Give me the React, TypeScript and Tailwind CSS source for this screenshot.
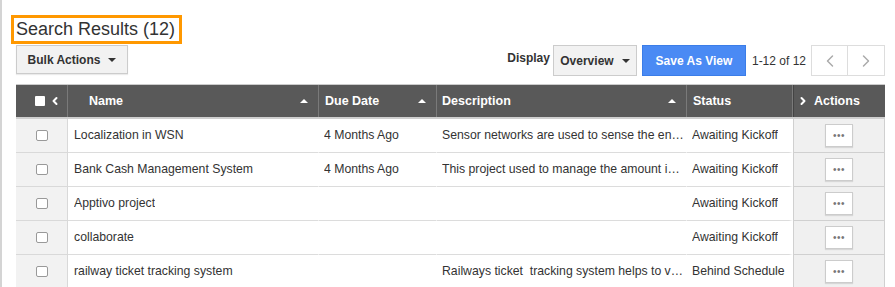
import { ChevronLeft, ChevronRight } from 'lucide-react';

interface Row {
  name: string;
  due: string;
  description: string;
  status: string;
}

const rows: Row[] = [
  {
    name: 'Localization in WSN',
    due: '4 Months Ago',
    description: 'Sensor networks are used to sense the environment',
    status: 'Awaiting Kickoff',
  },
  {
    name: 'Bank Cash Management System',
    due: '4 Months Ago',
    description: 'This project used to manage the amount in bank',
    status: 'Awaiting Kickoff',
  },
  { name: 'Apptivo project', due: '', description: '', status: 'Awaiting Kickoff' },
  { name: 'collaborate', due: '', description: '', status: 'Awaiting Kickoff' },
  {
    name: 'railway ticket tracking system',
    due: '',
    description: 'Railways ticket  tracking system helps to view the status',
    status: 'Behind Schedule',
  },
];

const grid = 'grid grid-cols-[52px_251px_118px_250px_106px_92px]';

function Caret() {
  return (
    <span className="ml-2 inline-block h-0 w-0 border-x-[4px] border-t-[4px] border-x-transparent border-t-[#333]" />
  );
}

function SortUp() {
  return (
    <span className="inline-block h-0 w-0 border-x-[4px] border-b-[4px] border-x-transparent border-b-white" />
  );
}

function HeaderCell({ label, sort, pad }: { label: string; sort?: boolean; pad: string }) {
  return (
    <div className={`flex items-center justify-between border-r border-[#7a7a7a] pr-[10px] ${pad}`}>
      <span>{label}</span>
      {sort && <SortUp />}
    </div>
  );
}

export default function App() {
  return (
    <div
      className="h-[287px] w-[895px] overflow-hidden border-l-2 border-[#d4d4d4] bg-white text-[#333]"
      style={{ fontFamily: '"Liberation Sans", Arial, sans-serif' }}
    >
      <div className="pl-[14px] pr-[10px] pt-[15px]">
        {/* Title */}
        <div className="-ml-[5px] flex">
          <h1 className="border-[3px] border-[#ff9800] pl-[2px] pr-[4px] text-[18px] leading-[23px] text-[#333]">
            Search Results (12)
          </h1>
        </div>

        {/* Toolbar */}
        <div className="mt-[1px] flex items-start justify-between">
          <button className="flex h-[29px] w-[112px] items-center justify-center border border-[#ccc] bg-[#f2f2f2] text-[12px] font-bold text-[#333] shadow-[0_1px_1px_rgba(0,0,0,0.08)]">
            Bulk Actions
            <Caret />
          </button>
          <div className="flex items-start">
            <span className="mt-[4px] mr-[3px] text-[12px] font-bold">Display</span>
            <button className="flex h-[31px] w-[84px] items-center justify-center border border-[#ccc] bg-[#f2f2f2] text-[12px] font-bold text-[#333]">
              Overview
              <Caret />
            </button>
            <button className="ml-[5px] h-[31px] w-[104px] border border-[#3b7de8] bg-[#4a8af4] text-[12px] font-bold text-white">
              Save As View
            </button>
            <span className="ml-[6px] mt-[7px] text-[12px] text-[#333]">1-12 of 12</span>
            <div className="ml-[5px] flex h-[31px] border border-[#ddd] bg-white">
              <span className="flex w-[36px] items-center justify-center border-r border-[#ddd] text-[#aaa]">
                <ChevronLeft size={20} strokeWidth={1.75} />
              </span>
              <span className="flex w-[36px] items-center justify-center text-[#aaa]">
                <ChevronRight size={20} strokeWidth={1.75} />
              </span>
            </div>
          </div>
        </div>

        {/* Table */}
        <div className="mt-[8px] w-[869px] border-t border-[#ccc]">
          <div className={`${grid} h-[34px] border-b-2 border-[#cfcfcf] bg-[#595959] text-[12.5px] font-bold text-white`}>
            <div className="flex items-center justify-end gap-[4px] border-r border-[#7a7a7a] pr-[6px]">
              <span className="inline-block h-[10px] w-[10px] rounded-[1px] bg-white" />
              <ChevronLeft size={12} strokeWidth={4} />
            </div>
            <HeaderCell label="Name" sort pad="pl-[21px]" />
            <HeaderCell label="Due Date" sort pad="pl-[6px]" />
            <HeaderCell label="Description" sort pad="pl-[5px]" />
            <HeaderCell label="Status" pad="pl-[6px]" />
            <div className="flex items-center gap-[5px] border-l border-[#444] pl-[3px]">
              <ChevronRight size={12} strokeWidth={4} />
              <span>Actions</span>
            </div>
          </div>

          {rows.map((row) => (
            <div key={row.name} className={`${grid} h-[34px] text-[12.25px] text-[#333]`}>
              <div className="flex items-center justify-center border-r border-b border-[#d9d9d9] bg-[#f2f2f2] pl-[1px]">
                <span className="inline-block h-[11px] w-[12px] rounded-[2px] border border-[#999] bg-white" />
              </div>
              <div className="flex min-w-0 items-center border-r border-b border-r-white border-b-[#dcdcdc] pl-[6px]">
                <span className="truncate">{row.name}</span>
              </div>
              <div className="flex min-w-0 items-center border-r border-b border-r-white border-b-[#dcdcdc] pl-[5px]">
                <span className="truncate">{row.due}</span>
              </div>
              <div className="flex min-w-0 items-center border-r border-b border-r-white border-b-[#dcdcdc] pl-[5px] pr-[1px]">
                <span className="overflow-hidden text-ellipsis whitespace-pre">{row.description}</span>
              </div>
              <div className="flex min-w-0 items-center border-r-[4px] border-b border-r-white border-b-[#dcdcdc] pl-[5px]">
                <span className="truncate">{row.status}</span>
              </div>
              <div className="flex items-center justify-center border-x border-b border-[#d0d0d0] bg-[#f0f0f0]">
                <span className="flex h-[23px] w-[28px] items-center justify-center border border-[#ccc] bg-white text-[10px] tracking-[0.5px] text-[#777] shadow-[0_1px_1px_rgba(0,0,0,0.1)]">
                  •••
                </span>
              </div>
            </div>
          ))}
        </div>
      </div>
    </div>
  );
}
